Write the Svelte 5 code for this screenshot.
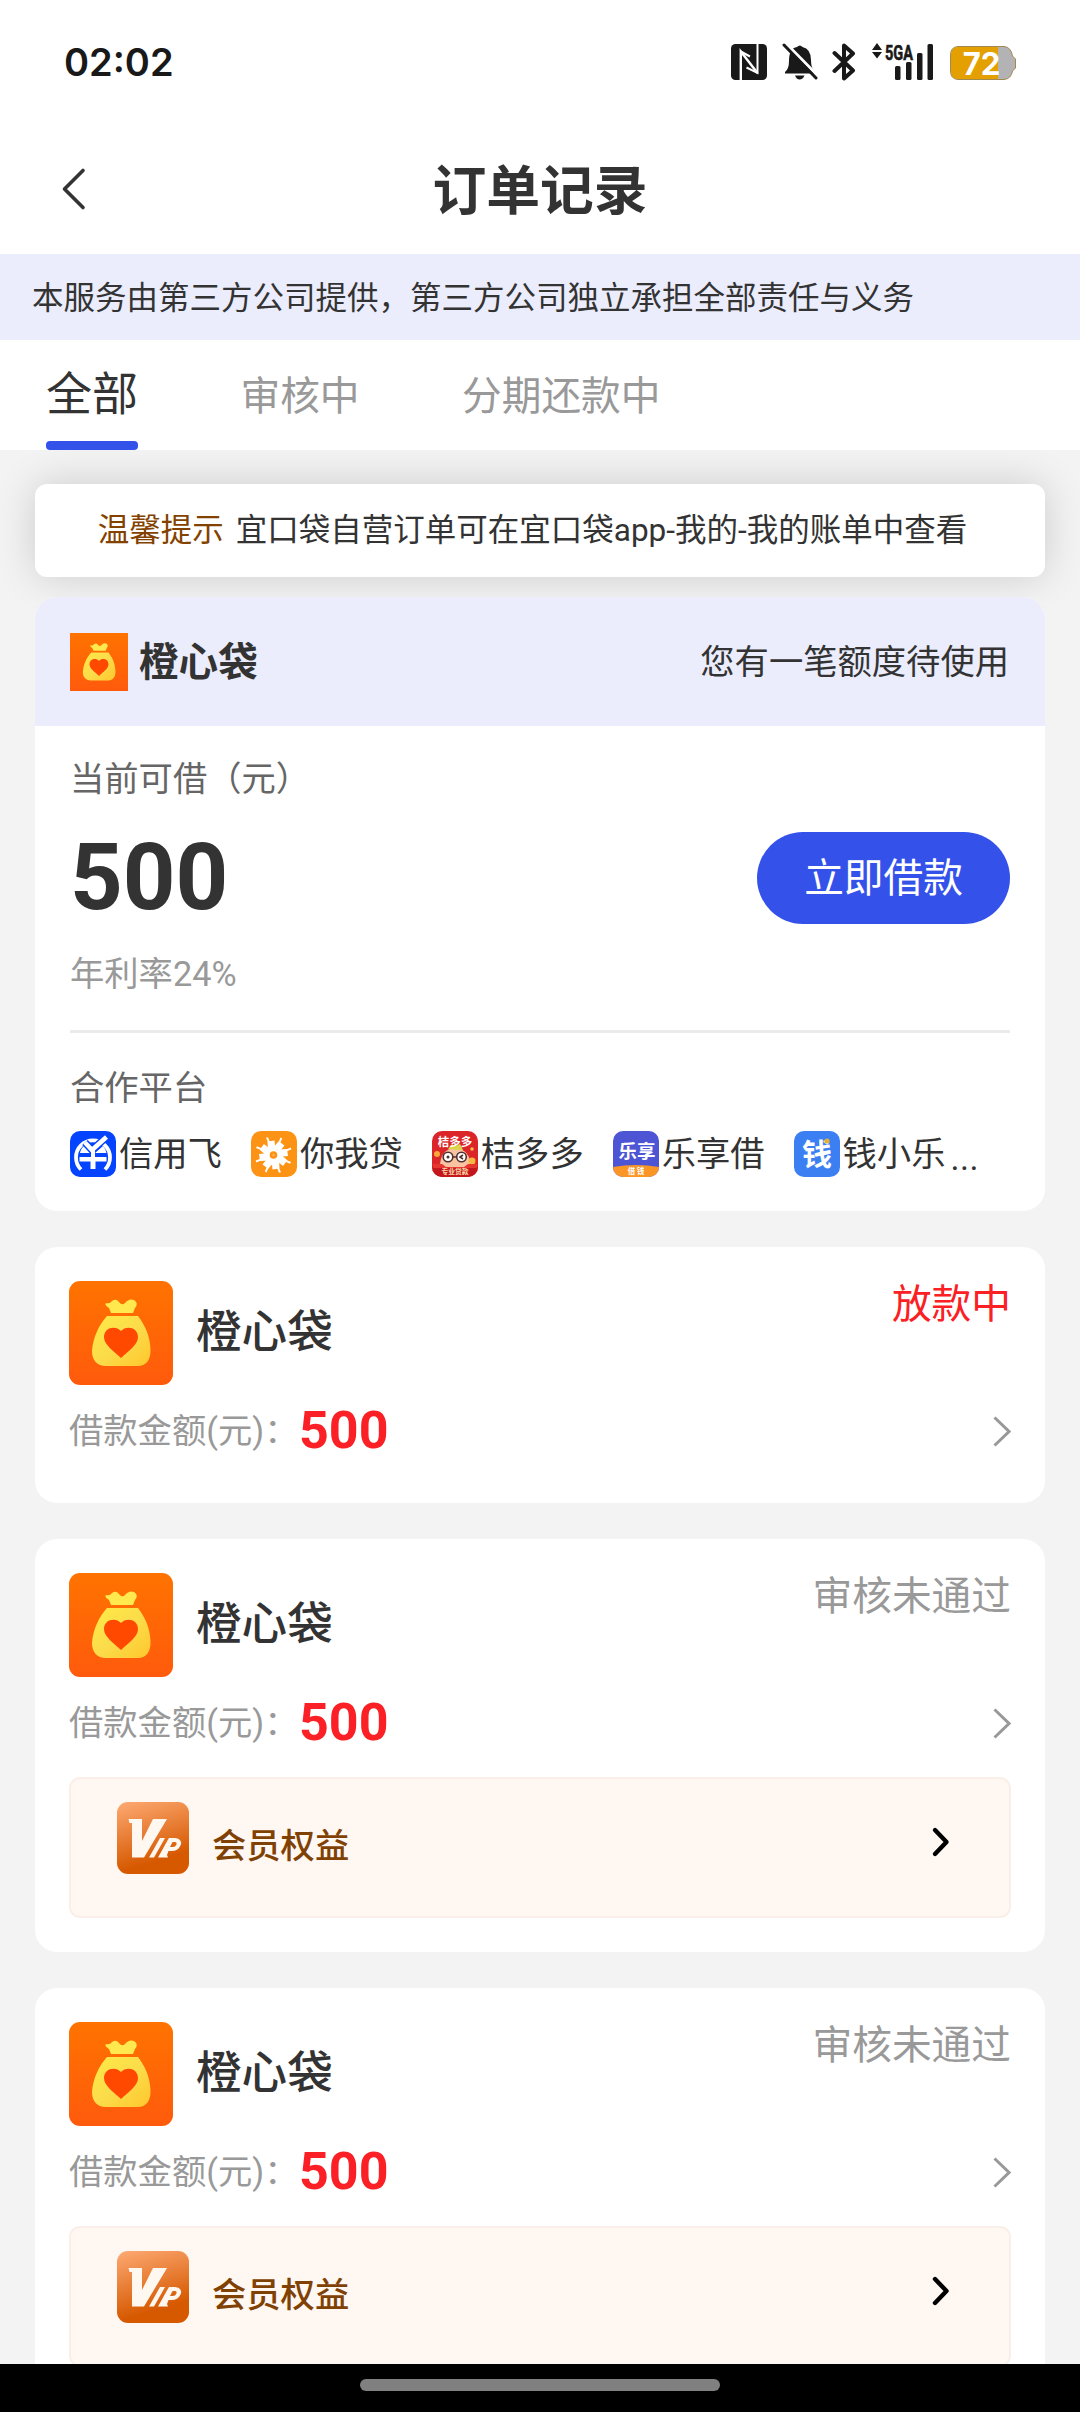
<script>
    //* page texts
    const text = {
        title: '订单记录',
        notice: '本服务由第三方公司提供，第三方公司独立承担全部责任与义务',
        tipLabel: '温馨提示',
        tip: '宜口袋自营订单可在宜口袋app-我的-我的账单中查看',
        brand: '橙心袋',
        pending: '您有一笔额度待使用',
        available: '当前可借（元）',
        rate: '年利率24%',
        btnBorrow: '立即借款',
        partners: '合作平台',
        amountLabel: '借款金额(元)：',
        vip: '会员权益',
    };

    const tabs = ['全部', '审核中', '分期还款中'];

    const partners = [
        {id: 'xyf', name: '信用飞'},
        {id: 'nwd', name: '你我贷'},
        {id: 'jdd', name: '桔多多'},
        {id: 'lxj', name: '乐享借'},
        {id: 'qxl', name: '钱小乐'},
    ];

    const orders = [
        {id: 1, amount: 500, status: '放款中', active: true, vip: false},
        {id: 2, amount: 500, status: '审核未通过', active: false, vip: true},
        {id: 3, amount: 500, status: '审核未通过', active: false, vip: true},
    ];

    //* local reactive variables
    let current = $state(0);
</script>

{#snippet bag()}
    <svg class="bag" viewBox="0 0 104 104">
        <defs>
            <linearGradient id="bag-bg" x1="0" y1="0" x2="0" y2="1">
                <stop offset="0" stop-color="#ff7300" />
                <stop offset="1" stop-color="#ff5a0c" />
            </linearGradient>
            <linearGradient id="bag-fill" x1="0" y1="0" x2="1" y2="1">
                <stop offset="0" stop-color="#ffea45" />
                <stop offset=".5" stop-color="#fbdc4b" />
                <stop offset="1" stop-color="#ffc72c" />
            </linearGradient>
        </defs>
        <rect width="104" height="104" fill="url(#bag-bg)" />
        <path d="M42 32 40 27Q35 24 37 22 41 23 43 20 47 17 50 21 53 25 56 22 60 17 65 19 70 22 66 27L64 32Z" fill="#ffe94e" />
        <path d="M38 35H69C76 44 81 55 81.500 68 82 79 77 85 69 85H37C28 85 23 79 23 70 24 56 30 44 38 35Z" fill="url(#bag-fill)" />
        <path d="M52 77C45 70 35 64 35 56 35 46 47 44 52 50 57 44 69 46 69 56 69 64 59 70 52 77Z" fill="#ff4800" />
    </svg>
{/snippet}

{#snippet partnerIcon(id)}
    <svg class="partner-icon" viewBox="0 0 46 46">
        {#if id === 'xyf'}
            <rect width="46" height="46" fill="#0444ff" />
            <path d="M11 38.500A17 17 0 1 1 35 38.500" fill="none" stroke="#fff" stroke-width="3.800" />
            <path d="M10 22Q11 17 15 14L21.500 22ZM25 22 33 15Q36 18 36.500 22ZM9.500 26H36.500V30.500H25.500V38H20.500V30.500H9.500Z" fill="#fff" />
            <path d="M15 11.500 22 19 36.500 6" fill="none" stroke="#0444ff" stroke-width="7.500" />
            <path d="M15 11.500 22 19 36.500 6" fill="none" stroke="#fff" stroke-width="4.500" />
            <path d="M21 19H25V28H21Z" fill="#fff" />
        {:else if id === 'nwd'}
            <rect width="46" height="46" fill="#fd9314" />
            <circle cx="22.500" cy="24" r="9" fill="#fff" />
            <g fill="#fff">
                {#each [0, 45, 90, 135, 180, 225, 270, 315] as angle (angle)}
                    <g transform="rotate({angle} 22.500 24)">
                        <path d="M17 19 16.500 10.500 23.500 9.500 24.500 19Z" />
                        <path d="M25.500 16 29.500 6.500 31.200 7.500 27 17Z" />
                    </g>
                {/each}
            </g>
            <circle cx="22.500" cy="24" r="3.800" fill="#fd9314" />
            <circle cx="22.500" cy="24" r="1.300" fill="#fbb15b" />
        {:else if id === 'jdd'}
            <rect width="46" height="46" fill="#dc2529" />
            <path d="M0 36H46V46H0Z" fill="#c4171d" />
            <path d="M8 36Q8 18 23 17 38 18 39 36Z" fill="#f9c3a1" />
            <path d="M16 18 20 13 23 15 28 13 31 19Z" fill="#d8d547" />
            <circle cx="5" cy="23" r="3" fill="#f6a83c" />
            <circle cx="40" cy="30" r="3.500" fill="#f6b642" />
            <circle cx="40" cy="18" r="1.800" fill="#f9b84c" />
            <path d="M1 33H10L14 36H32L36 33H45V37H1Z" fill="#e6342f" />
            <text x="23" y="14.500" class="art" font-size="11.500" fill="#fff">桔多多</text>
            <g fill="#fff" stroke="#50302f" stroke-width="1.600">
                <circle cx="16" cy="26" r="4.800" />
                <circle cx="29.500" cy="26" r="4.800" />
                <path d="M20.500 26H25M31 24 28 26 31 28" fill="none" />
            </g>
            <circle cx="16" cy="26" r="1.500" fill="#50302f" />
            <text x="23" y="43" class="art" font-size="6.800" fill="#fbd9a6">专业贷款</text>
        {:else if id === 'lxj'}
            <rect width="46" height="46" fill="#4d55d4" />
            <path d="M0 36Q23 32 46 36V46H0Z" fill="#fb9526" />
            <text x="24" y="26.500" class="art" font-size="18.500" fill="#fff">乐享</text>
            <text x="23" y="43" class="art" font-size="7.500" fill="#fff">借 钱</text>
        {:else}
            <rect width="46" height="46" fill="#3b7ff2" />
            <text x="23" y="34" class="art" font-size="30" fill="#fff">钱</text>
            <circle cx="33" cy="10" r="2.600" fill="#e9b02e" />
        {/if}
    </svg>
{/snippet}

<div class="page">
    <div class="status-bar">
        <span class="time">02:02</span>

        <div class="status-icons">
            <svg width="36" height="38" viewBox="0 0 36 38">
                <rect y="1" width="36" height="36" rx="4.500" fill="#191919" />
                <path d="M9.800 37V8.500L26.500 30" fill="none" stroke="#fff" stroke-width="2.400" />
                <path d="M26.500 1V30L15.500 24.500M9.800 8.500 19 13.500" fill="none" stroke="#fff" stroke-width="2" />
            </svg>

            <svg width="36" height="38" viewBox="0 0 36 38">
                <path d="M3 30.500V29Q7 26 7 18 7 5 15 4 18 1 20.500 4 29 6 29 17 29 26 33 28.500V30.500Z" fill="#191919" />
                <path d="M13 32.500H22.500Q21 36.500 17.500 36.500 14.500 36.500 13 32.500Z" fill="#191919" />
                <path d="M4 .500 36 33" stroke="#fff" stroke-width="3" />
                <path d="M2 2 34 35" stroke="#191919" stroke-width="3" stroke-linecap="round" />
            </svg>

            <svg class="bluetooth" width="24" height="38" viewBox="0 0 24 38">
                <path d="M2.500 10 21 27.500 12 35.500V2.500L21 10.500 2.500 28" fill="none" stroke="#191919" stroke-width="4" stroke-linejoin="round" stroke-linecap="round" />
            </svg>

            <svg class="signal" width="62" height="38" viewBox="0 0 62 38">
                <path d="M5 0 10 7H0ZM5 15.500 0 9H10Z" fill="#191919" />
                <text x="13" y="16.500" textLength="28" lengthAdjust="spacingAndGlyphs" class="network">5GA</text>
                <g fill="#191919">
                    <rect x="23" y="23" width="5.500" height="14" rx="1.500" />
                    <rect x="34" y="19" width="5.500" height="18" rx="1.500" />
                    <rect x="45" y="10" width="5.500" height="27" rx="1.500" />
                    <rect x="55.500" y="1" width="5.500" height="36" rx="1.500" />
                </g>
            </svg>

            <svg width="66" height="38" viewBox="0 0 66 38">
                <path d="M8 3.500H54Q61 4 62.500 13L65.500 16V25L62.500 28Q61 36 54 36.500H8Q.500 36 .500 28V12Q.500 4 8 3.500Z" fill="#b3b3b5" stroke="#a08a50" />
                <path d="M8 4H48V36H8Q1 36 1 28V12Q1 4 8 4Z" fill="#e4a000" />
                <text x="31.500" y="31.500" class="battery">72</text>
            </svg>
        </div>
    </div>

    <header class="title-bar">
        <svg class="back" width="28" height="44" viewBox="0 0 28 44">
            <path d="M23 3.500 4.500 22 23 40.500" fill="none" stroke="#333" stroke-width="3.600" stroke-linecap="round" stroke-linejoin="round" />
        </svg>
        <h1>{text.title}</h1>
    </header>

    <p class="notice">{text.notice}</p>

    <nav class="tabs">
        {#each tabs as tab, i (tab)}
            <button class="tab" class:is-active={current === i} onclick={() => current = i}>{tab}</button>
        {/each}
    </nav>

    <main class="content">
        <div class="tip">
            <span class="tip-label">{text.tipLabel}</span>
            <span>{text.tip}</span>
        </div>

        <section class="card offer">
            <div class="offer-head">
                <div class="offer-brand">
                    {@render bag()}
                    <strong>{text.brand}</strong>
                </div>
                <span>{text.pending}</span>
            </div>

            <div class="offer-body">
                <p class="available">{text.available}</p>
                <div class="offer-row">
                    <span class="offer-amount">500</span>
                    <button class="borrow">{text.btnBorrow}</button>
                </div>
                <p class="rate">{text.rate}</p>
                <hr />
                <p class="partners-title">{text.partners}</p>
                <div class="partners">
                    {#each partners as partner (partner.id)}
                        <div class="partner">
                            {@render partnerIcon(partner.id)}
                            <span>{partner.name}</span>
                        </div>
                    {/each}
                    <span class="more">...</span>
                </div>
            </div>
        </section>

        {#each orders as order (order.id)}
            <section class="card order">
                <div class="order-head">
                    {@render bag()}
                    <span class="order-name">{text.brand}</span>
                    <span class="order-status" class:is-active={order.active}>{order.status}</span>
                </div>

                <div class="order-row">
                    <span class="order-label">{text.amountLabel}</span>
                    <span class="order-amount">{order.amount}</span>
                    <svg width="20" height="34" viewBox="0 0 20 34">
                        <path d="M3.500 3.500 18 17.500 3.500 31.500" fill="none" stroke="#999" stroke-width="3" />
                    </svg>
                </div>

                {#if order.vip}
                    <div class="vip">
                        <svg width="72" height="72" viewBox="0 0 72 72">
                            <defs>
                                <linearGradient id="vip-bg" x1=".2" y1="0" x2=".5" y2="1">
                                    <stop offset="0" stop-color="#fba56d" />
                                    <stop offset=".85" stop-color="#d65900" />
                                </linearGradient>
                            </defs>
                            <rect width="72" height="72" rx="11" fill="url(#vip-bg)" />
                            <g fill="#fff8f0">
                                <path d="M11.500 17H25V39L36 17H50L27 55.500H15V21H12.500Z" />
                                <path d="M43 36H48L37 55.500H32Z" />
                                <path d="M52 36H58Q66 37 63.500 43.500 61 49 54.500 49H51.500L50 53 51 55.500H41L50.500 38.500ZM55.500 40 53 45H55.500Q58.500 45 59.500 42.500 60 40 58 40Z" fill-rule="evenodd" />
                            </g>
                        </svg>
                        <span>{text.vip}</span>
                        <svg class="vip-arrow" width="20" height="32" viewBox="0 0 20 32">
                            <path d="M4 4 15.500 16 4 28" fill="none" stroke="#000" stroke-width="4.400" stroke-linecap="round" stroke-linejoin="round" />
                        </svg>
                    </div>
                {/if}
            </section>
        {/each}
    </main>

    <footer class="home-bar"><span></span></footer>
</div>

<style>
    :global(body) {
        margin: 0;
        background-color: #f3f3f3;
    }

    .page {
        display: flex;
        flex-direction: column;
        width: 1080px;
        height: 2412px;
        overflow: hidden;
        background-color: #fff;
        color: #333;
        font-family: Roboto, "Noto Sans CJK SC", sans-serif;
        font-size: 34.3px;
    }

    p, h1 {
        margin: 0;
    }

    button {
        padding: 0;
        border: 0;
        background: none;
        font-family: inherit;
        cursor: pointer;
    }

    svg {
        display: block;
        flex: none;
    }

    .status-bar {
        display: flex;
        flex: none;
        justify-content: space-between;
        align-items: center;
        height: 124px;
        padding: 0 64px;
    }

    .time {
        color: #191919;
        font: 600 38px/40px Inter, sans-serif;
    }

    .status-icons {
        display: flex;
        gap: 15px;
    }

    .bluetooth {
        margin-left: -1px;
    }

    .signal {
        margin: 0 1px;
        overflow: visible;
    }

    .network {
        fill: #191919;
        stroke: #191919;
        stroke-width: .6px;
        font: 700 21px Roboto, sans-serif;
    }

    .battery {
        fill: #fff;
        font: 700 31px Inter, sans-serif;
        text-anchor: middle;
    }

    .title-bar {
        display: flex;
        flex: none;
        align-items: center;
        height: 130px;
        padding: 0 60px;
    }

    .title-bar h1 {
        flex: 1;
        padding: 5px 28px 0 0;
        font-size: 53.8px;
        font-weight: 700;
        line-height: 125px;
        text-align: center;
    }

    .notice {
        flex: none;
        height: 86px;
        padding-left: 32px;
        background-color: #ebedfc;
        font-size: 31.5px;
        line-height: 89px;
        white-space: nowrap;
    }

    .tabs {
        display: flex;
        flex: none;
        gap: 102.5px;
        height: 110px;
        padding-left: 46px;
    }

    .tab {
        display: flex;
        flex-direction: column;
        color: #999;
        font-size: 39.7px;
        line-height: 113px;
        white-space: nowrap;
    }

    .tab.is-active {
        color: #333;
        font-size: 46px;
        line-height: 108px;
    }

    .tab.is-active::after {
        content: "";
        width: 100%;
        height: 9px;
        margin-top: -7px;
        border-radius: 4px;
        background-color: #3452ea;
    }

    .content {
        flex: 1;
        min-height: 0;
        padding: 34px 35px 0;
        overflow: hidden;
        background-color: #f3f3f3;
    }

    .tip {
        display: flex;
        justify-content: center;
        gap: 12px;
        box-sizing: border-box;
        height: 93px;
        margin-bottom: 20px;
        padding-right: 15px;
        border-radius: 12px;
        background-color: #fff;
        box-shadow: 0 0 40px rgba(0, 0, 0, .16);
        font-size: 31.5px;
        line-height: 93px;
        white-space: nowrap;
    }

    .tip-label {
        color: #844200;
    }

    .card {
        position: relative;
        margin-bottom: 36px;
        border-radius: 22px;
        background-color: #fff;
        overflow: hidden;
    }

    .offer {
        height: 614px;
    }

    .offer-head {
        display: flex;
        justify-content: space-between;
        height: 129px;
        padding: 0 36px 0 35px;
        background-color: #ebedfc;
        line-height: 130px;
    }

    .offer-brand {
        display: flex;
        align-items: center;
        gap: 11px;
        height: 129px;
    }

    .offer-brand strong {
        margin-top: 2px;
        font-size: 39.6px;
    }

    .offer-brand .bag {
        width: 58px;
        height: 58px;
        margin-top: 1px;
    }

    .offer-body {
        padding: 0 35px;
    }

    .available {
        height: 106px;
        color: #666;
        line-height: 107px;
    }

    .offer-row {
        display: flex;
        justify-content: space-between;
        align-items: center;
        height: 92px;
    }

    .offer-amount {
        font-size: 92px;
        font-weight: 700;
        line-height: 92px;
    }

    .borrow {
        width: 253px;
        height: 92px;
        border-radius: 46px;
        background-color: #3452ea;
        color: #fff;
        font-size: 39.7px;
        line-height: 89px;
    }

    .rate {
        height: 106px;
        color: #999;
        line-height: 101px;
    }

    hr {
        height: 3px;
        margin: 0;
        border: 0;
        background-color: #ebebeb;
    }

    .partners-title {
        height: 98px;
        color: #666;
        line-height: 111px;
    }

    .partners {
        display: flex;
        line-height: 46px;
        white-space: nowrap;
    }

    .partner {
        display: flex;
        gap: 3px;
        width: 180.9px;
    }

    .partner span {
        margin-top: 0;
    }

    .partner-icon {
        width: 46px;
        height: 46px;
        border-radius: 10px;
    }

    .art {
        font-family: "Noto Sans CJK SC", sans-serif;
        font-weight: 700;
        text-anchor: middle;
    }

    .more {
        margin: 4px 0 0 -24px;
        letter-spacing: .5px;
    }

    .order {
        padding: 34px;
    }

    .order-head {
        display: flex;
        gap: 23px;
        height: 104px;
    }

    .order-head .bag {
        width: 104px;
        height: 104px;
        border-radius: 11px;
    }

    .order-name {
        font-size: 45.6px;
        font-weight: 500;
        line-height: 103px;
    }

    .order-status {
        margin: -34px 0 0 auto;
        color: #999;
        font-size: 39.7px;
        line-height: 115px;
    }

    .order-status.is-active {
        color: #fa2024;
    }

    .order-row {
        display: flex;
        align-items: center;
        height: 84px;
        padding-top: 4px;
        margin-bottom: 12px;
    }

    .order:not(:has(.vip)) .order-row {
        margin-bottom: -4px;
    }

    .order-label {
        width: 230px;
        color: #999;
        line-height: 89px;
        white-space: nowrap;
    }

    .order-amount {
        flex: 1;
        color: #fb2025;
        font-size: 52px;
        font-weight: 700;
        line-height: 88px;
    }

    .vip {
        display: flex;
        box-sizing: border-box;
        height: 141px;
        padding: 23px 58px 0 46px;
        border: 2px solid #f9efe8;
        border-radius: 11px;
        background-color: #fff7f1;
        color: #7f4104;
        font-weight: 500;
        line-height: 89px;
    }

    .vip span {
        flex: 1;
        padding-left: 23px;
    }

    .vip .vip-arrow {
        margin-top: 24px;
    }

    .home-bar {
        display: flex;
        flex: none;
        justify-content: center;
        height: 48px;
        background-color: #000;
    }

    .home-bar span {
        width: 360px;
        height: 12px;
        margin-top: 15px;
        border-radius: 6px;
        background-color: #808080;
    }
</style>
